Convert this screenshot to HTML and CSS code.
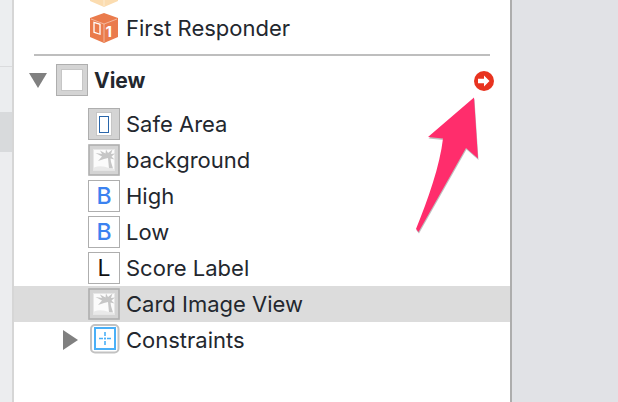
FILE: index.html
```html
<!DOCTYPE html>
<html lang="en">

<head>
  <title>Document outline</title>
  <link rel="stylesheet" href="styles.css">
</head>

<body>
  <svg class="defs" width="0" height="0">
    <symbol id="photo" viewBox="0 0 32 32">
      <rect x="1" y="1" width="30" height="30" fill="#d4d4d4" stroke="#aeaeae" stroke-width="1.6"/>
      <rect x="5.5" y="5.5" width="21" height="21" fill="#fbfbfb" stroke="#e6e6e6"/>
      <path d="M7.5 9 L14 10 L12 6.5 L17.5 9.5 L18 5.5 L20 9 L24.5 5.5 L23 10 L27 9.5 L23.5 12.5 L26.5 15.5 L22.5 14.5 L23 18 L25 24.5 L21 24.5 L20 14 L16 15 L10 17 L14 12.5 Z" fill="#c6c6c6"/>
      <path d="M6 23.5 Q13 21 21 24 L26 25 V26 H6 Z" fill="#e9e9e9"/>
    </symbol>
    <symbol id="cube" viewBox="0 0 28 30">
      <path d="M14 0 L28 5 V24 L14 30 L0 24 V5 Z" fill="currentColor"/>
      <path d="M1 6 L14 11 L27 6 M14 11 V29" fill="none" stroke="#fff" stroke-opacity=".45"/>
    </symbol>
  </svg>

  <div class="sidebar">
    <div class="side-top"></div>
    <div class="side-mid"></div>
    <div class="side-sel"></div>
    <div class="side-rest"></div>
  </div>

  <main class="outline">
    <div class="clipped-row">
      <svg class="cube cube-light" width="28" height="30"><use href="#cube"/></svg>
    </div>
    <div class="row">
      <svg class="cube cube-orange" width="28" height="30" viewBox="0 0 28 30">
        <use href="#cube"/>
        <rect x="4" y="10" width="6" height="10" fill="none" stroke="#fff" stroke-width="1.3" transform="skewY(18) translate(0 -2)"/>
        <text class="cube-num" x="15.5" y="24">1</text>
      </svg>
      <span>First Responder</span>
    </div>

    <div class="separator"></div>

    <div class="row row-view">
      <span class="tri-down"></span>
      <span class="box box-gray"><span class="view-inner"></span></span>
      <b class="view-name">View</b>
      <span class="badge">
        <svg width="20" height="20" viewBox="0 0 20 20">
          <circle cx="10" cy="10" r="10" fill="#e8331f"/>
          <path d="M4 7.8 H10 V4.5 L15.5 10 L10 15.5 V12.2 H4 Z" fill="#fff"/>
        </svg>
      </span>
    </div>

    <div class="row">
      <span class="box box-gray"><span class="safe-inner"><span class="safe-blue"></span></span></span>
      <span>Safe Area</span>
    </div>
    <div class="row">
      <svg class="box-svg" width="32" height="32"><use href="#photo"/></svg>
      <span>background</span>
    </div>
    <div class="row">
      <span class="box letter letter-blue">B</span>
      <span>High</span>
    </div>
    <div class="row">
      <span class="box letter letter-blue">B</span>
      <span>Low</span>
    </div>
    <div class="row">
      <span class="box letter">L</span>
      <span>Score Label</span>
    </div>
    <div class="row row-selected">
      <svg class="box-svg" width="32" height="32"><use href="#photo"/></svg>
      <span>Card Image View</span>
    </div>
    <div class="row row-constraints">
      <span class="tri-right"></span>
      <svg class="box-svg" width="32" height="32" viewBox="0 0 32 32">
        <rect x="3" y="1" width="27.5" height="27.5" rx="4" fill="#fff" stroke="#c2c2c2" stroke-width="2"/>
        <rect x="7" y="4" width="20" height="21" fill="#fff" stroke="#4ab0f8" stroke-width="2"/>
        <path d="M17 8 V12 M17 13.5 V15.5 M17 17 V21 M11 14.5 H15 M16 14.5 H18 M19 14.5 H23" stroke="#4ab0f8" stroke-width="1.6"/>
      </svg>
      <span>Constraints</span>
    </div>
  </main>

  <div class="backdrop"></div>

  <!-- Annotation arrow drawn over the panel -->
  <svg class="arrow" width="618" height="402" viewBox="0 0 618 402">
    <path class="arrow-shadow" d="M474 97.5 L428 137 L443 138.5 C440 165 428 200 416 229 L418.5 232 L466 148 L478 158.5 Z"/>
    <path class="arrow-fill" d="M474 97.5 L428 137 L443 138.5 C440 165 428 200 416 229 L418.5 232 L466 148 L478 158.5 Z"/>
  </svg>
</body>
</html>
```

FILE: styles.css
```css
body {
  margin: 0;
  height: 402px;
  display: flex;
  overflow: hidden;
  font-family: Inter, "Liberation Sans", sans-serif;
  font-size: 22px;
  color: #23272e;
  background-color: #e1e2e6;
}

.defs {
  position: absolute;
}

.sidebar {
  width: 12px;
  border-right: 2px solid #d6d6d6;
  display: flex;
  flex-direction: column;
}

.side-top {
  height: 66px;
  background-color: #eceef0;
  border-bottom: 1px solid #dadbdd;
}

.side-mid {
  height: 45px;
  background-color: #ebedef;
}

.side-sel {
  height: 40px;
  background-color: #d8dadc;
}

.side-rest {
  flex: 1;
  background-color: #ecedef;
}

.outline {
  width: 496px;
  background-color: #fff;
  border-right: 2px solid #adadad;
}

.backdrop {
  flex: 1;
}

.clipped-row {
  height: 10px;
  padding-left: 76px;
  overflow: hidden;
}

.row {
  height: 36px;
  padding-left: 74px;
  display: flex;
  align-items: center;
  gap: 6px;
  white-space: nowrap;
}

.row-selected {
  background-color: #dcdcdc;
}

.row-view {
  padding-left: 15px;
  padding-right: 16px;
  margin-bottom: 8px;
  gap: 0;
}

.row-constraints {
  padding-left: 49px;
  gap: 0;
}

.row-constraints span:last-child {
  margin-left: 6px;
}

.separator {
  height: 2px;
  margin: 8px 20px 6px;
  background-color: #bebebe;
}

.cube {
  display: block;
  flex-shrink: 0;
}

.cube-light {
  margin-top: -23px;
  color: #fbdcb0;
}

.row .cube {
  margin: 0 2px;
}

.cube-orange {
  color: #ea7b4c;
}

.cube-num {
  font-size: 15px;
  font-weight: 700;
  fill: #fff;
}

.box {
  width: 32px;
  height: 32px;
  box-sizing: border-box;
  border: 1.6px solid #aeaeae;
  flex-shrink: 0;
  display: flex;
  align-items: center;
  justify-content: center;
}

.box-svg {
  flex-shrink: 0;
  display: block;
}

.box-gray {
  background-color: #d4d4d4;
}

.view-inner,
.safe-inner {
  width: 22px;
  height: 22px;
  box-sizing: border-box;
  background-color: #fff;
  border: 1px solid #c6c6c6;
}

.safe-inner {
  width: 16px;
  height: 24px;
  display: flex;
  align-items: center;
  justify-content: center;
}

.safe-blue {
  width: 10px;
  height: 17px;
  box-sizing: border-box;
  border: 1px solid #2a66aa;
}

.letter {
  font-size: 23px;
  font-weight: 400;
  color: #111;
  background-color: #fff;
}

.letter-blue {
  font-weight: 500;
  color: #3b82f0;
}

.view-name {
  margin-left: 6px;
  font-size: 21px;
  font-weight: 700;
}

.badge {
  margin-left: auto;
  height: 20px;
}

.tri-down {
  width: 0;
  height: 0;
  margin-right: 9px;
  border-left: 9px solid transparent;
  border-right: 9px solid transparent;
  border-top: 15px solid #808080;
}

.tri-right {
  width: 0;
  height: 0;
  margin-right: 10px;
  border-top: 10px solid transparent;
  border-bottom: 10px solid transparent;
  border-left: 15px solid #808080;
}

.arrow {
  position: absolute;
  top: 0;
  left: 0;
  pointer-events: none;
}

.arrow-shadow {
  fill: #000;
  opacity: 0.25;
  transform: translate(0.5px, 1.5px);
}

.arrow-fill {
  fill: #ff2d6c;
}
```
